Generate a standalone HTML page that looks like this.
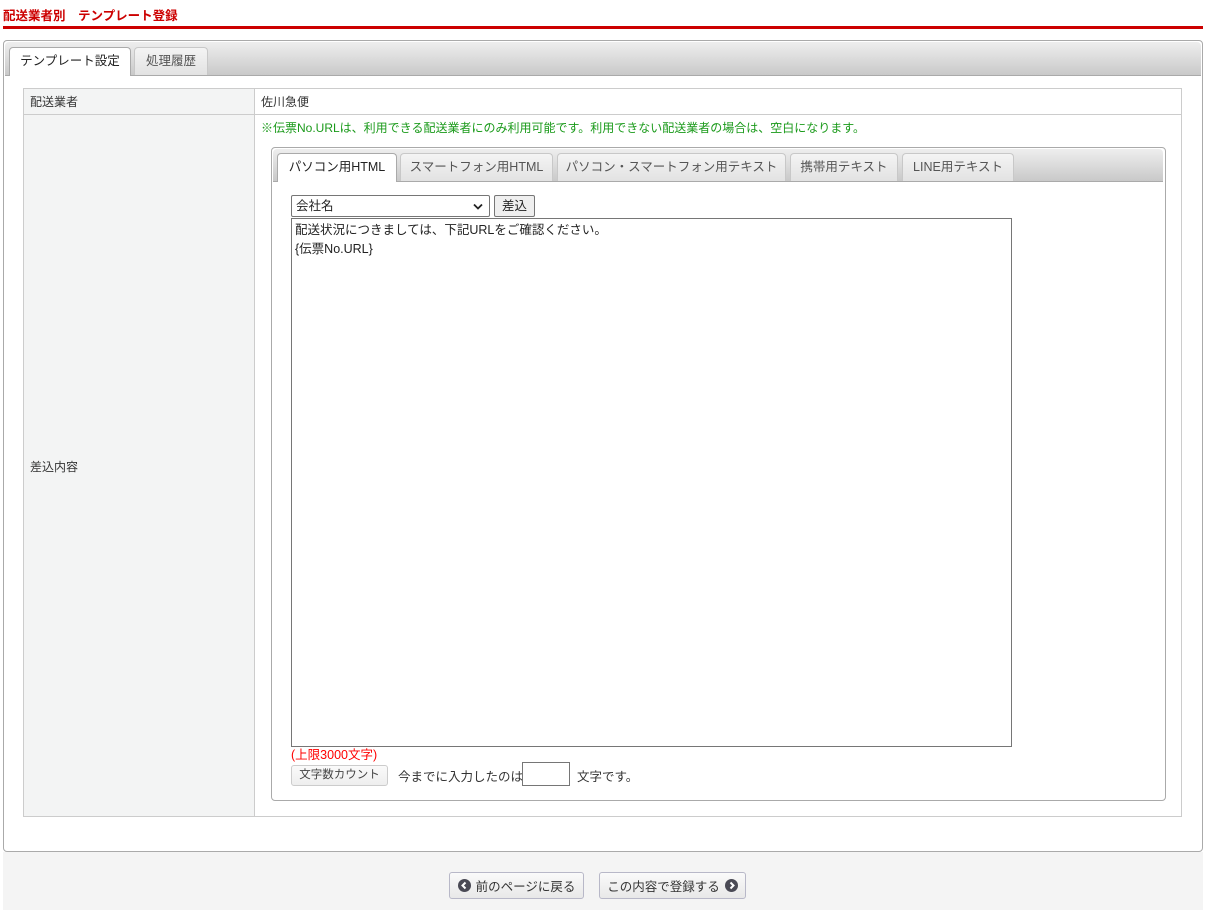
<!DOCTYPE html>
<html><head><meta charset="utf-8"><style>
*{box-sizing:border-box}
body{margin:0;width:1209px;height:910px;position:relative;background:#fff;font-family:"Liberation Sans","Noto Sans CJK JP",sans-serif;font-size:12px;color:#333;overflow:hidden}
.a{position:absolute}
.tab{position:absolute;border:1px solid #c8c8c8;border-bottom:none;border-radius:4px 4px 0 0;background:linear-gradient(#f4f4f4,#e2e2e2);color:#555;font-size:12.5px;text-align:center;line-height:26px}
.tab.on{background:#fff;color:#222;border-color:#aaa}
.bar{position:absolute;background:linear-gradient(#eee,#c9c9c9);border-bottom:1px solid #aaa;border-radius:4px 4px 0 0}
.btn{position:absolute;border:1px solid #b8b8c8;border-radius:3px;background:linear-gradient(#fafafa,#e8e8e8);font-size:12.5px;color:#333;display:flex;align-items:center;justify-content:center;gap:5px}
.ic{display:inline-block;width:13px;height:13px;border-radius:50%;background:#4a4a55;position:relative}
.ic svg{position:absolute;left:0;top:0}
</style></head><body>
<div class="a" style="left:3px;top:5px;color:#c00;font-weight:bold;font-size:12.5px">配送業者別　テンプレート登録</div>
<div class="a" style="left:3px;top:26px;width:1200px;height:3px;background:#c00"></div>
<div class="a" style="left:3px;top:40px;width:1200px;height:812px;border:1px solid #aaa;border-radius:4px"></div>
<div class="bar" style="left:5px;top:42px;width:1196px;height:34px"></div>
<div class="tab on" style="left:9px;top:47px;width:122px;height:29px">テンプレート設定</div>
<div class="tab" style="left:134px;top:47px;width:74px;height:28px">処理履歴</div>
<div class="a" style="left:23px;top:88px;width:1159px;height:729px;border:1px solid #ccc"></div>
<div class="a" style="left:24px;top:89px;width:231px;height:727px;background:#f3f4f4;border-right:1px solid #ccc"></div>
<div class="a" style="left:23px;top:114px;width:1159px;height:1px;background:#ccc"></div>
<div class="a" style="left:30px;top:93px">配送業者</div>
<div class="a" style="left:261px;top:93px">佐川急便</div>
<div class="a" style="left:30px;top:458px">差込内容</div>
<div class="a" style="left:261px;top:119px;color:#1a9a1a">※伝票No.URLは、利用できる配送業者にのみ利用可能です。利用できない配送業者の場合は、空白になります。</div>
<div class="a" style="left:271px;top:147px;width:895px;height:654px;border:1px solid #aaa;border-radius:4px"></div>
<div class="bar" style="left:273px;top:149px;width:890px;height:33px"></div>
<div class="tab on" style="left:277px;top:153px;width:120px;height:29px">パソコン用HTML</div>
<div class="tab" style="left:400px;top:153px;width:153px;height:28px">スマートフォン用HTML</div>
<div class="tab" style="left:557px;top:153px;width:229px;height:28px">パソコン・スマートフォン用テキスト</div>
<div class="tab" style="left:790px;top:153px;width:108px;height:28px">携帯用テキスト</div>
<div class="tab" style="left:902px;top:153px;width:112px;height:28px">LINE用テキスト</div>
<div class="a" style="left:291px;top:195px;width:199px;height:22px;border:1px solid #767676;border-radius:2px;padding:0 4px;line-height:20px;font-size:12.5px;color:#222">会社名<svg style="position:absolute;right:6px;top:7px" width="10" height="7" viewBox="0 0 10 7"><path d="M1 1.5L5 5.5L9 1.5" stroke="#222" stroke-width="1.8" fill="none"/></svg></div>
<div class="a" style="left:494px;top:195px;width:41px;height:22px;border:1px solid #767676;border-radius:2px;background:#efefef;text-align:center;line-height:20px;font-size:12.5px;color:#222">差込</div>
<div class="a" style="left:291px;top:218px;width:721px;height:529px;border:1px solid #767676;padding:2px 3px;line-height:19px;font-size:12.5px;color:#222">配送状況につきましては、下記URLをご確認ください。<br>{伝票No.URL}</div>
<div class="a" style="left:291px;top:744px;color:#f00;font-size:12.5px">(上限3000文字)</div>
<div class="a" style="left:291px;top:765px;width:97px;height:21px;border:1px solid #ccc;border-radius:3px;background:linear-gradient(#fafafa,#eee);text-align:center;line-height:19px;font-size:11.5px;color:#444">文字数カウント</div>
<div class="a" style="left:398px;top:766px;font-size:12.5px">今までに入力したのは</div>
<div class="a" style="left:522px;top:762px;width:48px;height:24px;border:1px solid #767676"></div>
<div class="a" style="left:577px;top:766px;font-size:12.5px">文字です。</div>
<div class="a" style="left:3px;top:852px;width:1200px;height:58px;background:#f4f4f4"></div>
<div class="btn" style="left:449px;top:872px;width:135px;height:27px"><span class="ic"><svg width="13" height="13" viewBox="0 0 13 13"><path d="M7.5 3.5L4.5 6.5L7.5 9.5" stroke="#fff" stroke-width="2" fill="none"/></svg></span>前のページに戻る</div>
<div class="btn" style="left:599px;top:872px;width:147px;height:27px">この内容で登録する<span class="ic"><svg width="13" height="13" viewBox="0 0 13 13"><path d="M5.5 3.5L8.5 6.5L5.5 9.5" stroke="#fff" stroke-width="2" fill="none"/></svg></span></div>
</body></html>
